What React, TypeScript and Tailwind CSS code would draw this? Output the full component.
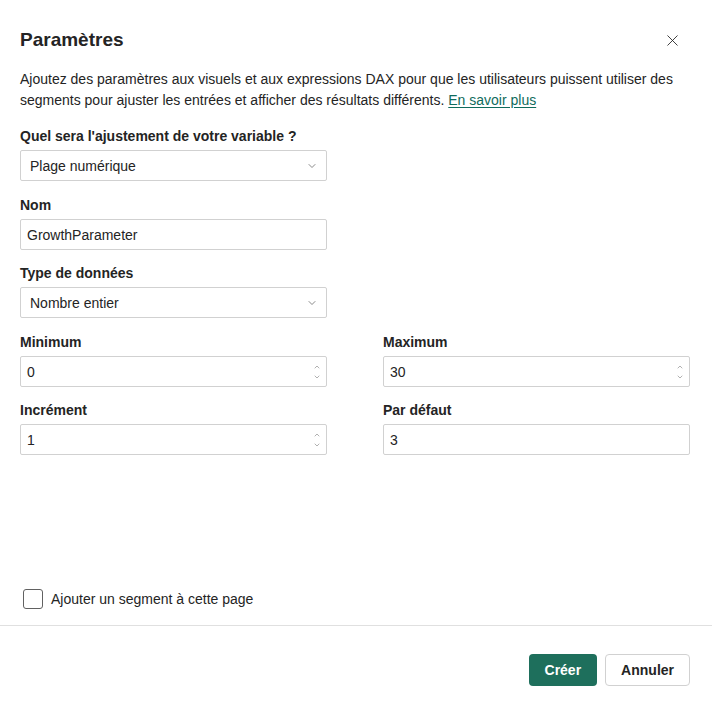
import { X, ChevronDown, ChevronUp } from 'lucide-react';

const Label = ({ children }: { children: React.ReactNode }) => (
  <label className="block text-sm font-semibold text-[#242424] leading-5 mb-[4px]">{children}</label>
);

const SelectBox = ({ value }: { value: string }) => (
  <div className="h-[31px] w-[307px] border border-[#d1d1d1] rounded-[2px] flex items-center justify-between pl-[9px] pr-[8px] text-sm text-[#242424]">
    <span>{value}</span>
    <ChevronDown size={12} strokeWidth={1.5} className="text-[#616161]" />
  </div>
);

const TextBox = ({ value, spin = false }: { value: string; spin?: boolean }) => (
  <div className="h-[31px] w-[307px] border border-[#d1d1d1] rounded-[2px] flex items-center justify-between pl-[6px] pr-[5px] text-sm text-[#242424]">
    <span>{value}</span>
    {spin && (
      <div className="flex flex-col items-center gap-[2px] text-[#8a8a8a]">
        <ChevronUp size={8} strokeWidth={2} />
        <ChevronDown size={8} strokeWidth={2} />
      </div>
    )}
  </div>
);

const App = () => {
  return (
    <div className="w-[712px] h-[707px] bg-white flex flex-col text-[#242424] font-['Segoe_UI','Liberation_Sans',sans-serif]">
      {/* Header */}
      <div className="flex items-center justify-between pl-5 pr-[30px] pt-[26px]">
        <h1 className="text-[19px] font-semibold leading-7">Paramètres</h1>
        <X size={19} strokeWidth={1.1} className="text-[#242424]" />
      </div>

      <div className="px-5 pt-[15px] flex-1 flex flex-col">
        <p className="text-sm leading-[21px] text-[#242424]">
          Ajoutez des paramètres aux visuels et aux expressions DAX pour que les utilisateurs puissent utiliser des
          <br />
          segments pour ajuster les entrées et afficher des résultats différents.{' '}
          <a className="text-[#0f6b5c] underline underline-offset-2">En savoir plus</a>
        </p>

        <div className="mt-[15px]">
          <Label>Quel sera l'ajustement de votre variable ?</Label>
          <SelectBox value="Plage numérique" />
        </div>

        <div className="mt-[14px]">
          <Label>Nom</Label>
          <TextBox value="GrowthParameter" />
        </div>

        <div className="mt-[13px]">
          <Label>Type de données</Label>
          <SelectBox value="Nombre entier" />
        </div>

        <div className="mt-[14px] grid grid-cols-[307px_307px] gap-x-[56px] gap-y-[13px]">
          <div>
            <Label>Minimum</Label>
            <TextBox value="0" spin />
          </div>
          <div>
            <Label>Maximum</Label>
            <TextBox value="30" spin />
          </div>
          <div>
            <Label>Incrément</Label>
            <TextBox value="1" spin />
          </div>
          <div>
            <Label>Par défaut</Label>
            <TextBox value="3" />
          </div>
        </div>

        <div className="mt-auto mb-[16px] flex items-center gap-[8px] pl-[3px]">
          <div className="w-[20px] h-[20px] border border-[#616161] rounded-[3px]" />
          <span className="text-sm">Ajouter un segment à cette page</span>
        </div>
      </div>

      <div className="border-t border-[#e0e0e0]" />

      <div className="h-[81px] flex items-start justify-end gap-[8px] pr-[22px] pt-[28px]">
        <button className="h-[32px] px-[16px] bg-[#1e6f5c] text-white text-sm font-semibold rounded-[4px]">Créer</button>
        <button className="h-[32px] px-[15px] bg-white border border-[#d1d1d1] text-sm font-semibold rounded-[4px]">Annuler</button>
      </div>
    </div>
  );
};

export default App;
